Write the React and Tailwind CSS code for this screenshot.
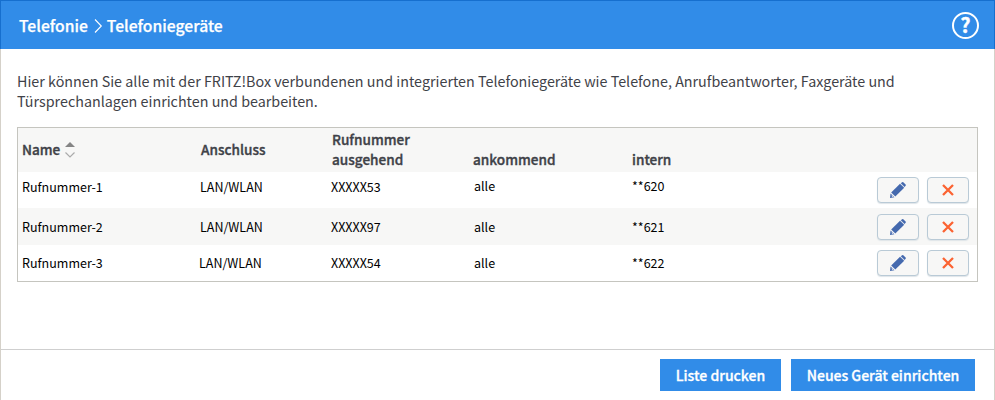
const devices = [
  { name: 'Rufnummer-1', line: 'LAN/WLAN', out: 'XXXXX53', incoming: 'alle', internal: '**620' },
  { name: 'Rufnummer-2', line: 'LAN/WLAN', out: 'XXXXX97', incoming: 'alle', internal: '**621' },
  { name: 'Rufnummer-3', line: 'LAN/WLAN', out: 'XXXXX54', incoming: 'alle', internal: '**622' },
];

const rowStyles = [
  'h-9 bg-white pt-[5px]',
  'h-[37px] bg-[#f7f7f6] pt-[6px]',
  'h-9 bg-white pt-[5px]',
];
const textStyles = ['pt-0', 'pt-[3px]', 'pt-[3px]'];
const shiftedStyles = ['-mt-px', 'mt-0', 'mt-0'];
const lineStyles = ['ml-0', 'ml-0', '-ml-px'];

function PencilIcon() {
  return (
    <svg width="16" height="16" viewBox="0 0 16 16" aria-hidden="true">
      <path d="M0 16 .6 11.6 4.4 15.2Z" fill="#4469ae" />
      <path d="M1.5 12.6 3.6 14.6 2 14.9Z" fill="#dfe5ef" />
      <path d="M1.2 10.6 10 1.8 14.2 5.8 5.3 14.6Z" fill="#4469ae" />
      <path d="M10.8 1.3 12.1.2Q12.7-.2 13.3.3L15.6 2.6Q16.1 3.2 15.6 3.8L14.6 5Z" fill="#4469ae" />
      <path d="M10.6 1.5 14.4 5.3" stroke="#c5d0e3" strokeWidth=".5" />
    </svg>
  );
}

function CrossIcon() {
  return (
    <svg width="12" height="12" viewBox="0 0 12 12" aria-hidden="true">
      <path d="M1 1 11 11M11 1 1 11" stroke="#fb6332" strokeWidth="2.3" />
    </svg>
  );
}

function IconButton({ label, children }) {
  return (
    <button
      aria-label={label}
      className="flex h-[26px] w-[42px] items-center justify-center rounded-[4px] border border-[#b9cad6] bg-[#f7f7f6] shadow-[0_1px_1px_#dfe5e9]"
    >
      {children}
    </button>
  );
}

export default function App() {
  return (
    <div className="flex h-[400px] w-[995px] flex-col bg-white font-['Noto_Sans_CJK_SC',sans-serif] text-[#3f4248]">
      <header className="flex h-[49px] shrink-0 items-center justify-between border-x border-t border-[#166fce] bg-[#318ce8] pr-[15px] pl-[18px] text-white">
        <div className="flex items-center pt-[2px] text-[15.7px] leading-5 font-medium [-webkit-text-stroke:0.25px]">
          <span>Telefonie</span>
          <svg className="mr-[4px] ml-[6px]" width="9" height="16" viewBox="0 0 9 16" fill="none" aria-hidden="true">
            <path d="M1 1.5 7.3 8 1 14.5" stroke="currentColor" strokeWidth="1.1" />
          </svg>
          <span>Telefoniegeräte</span>
        </div>
        <button aria-label="Hilfe" className="flex size-[27px] items-center justify-center rounded-full border-2 border-white pb-px text-[20px] leading-5 font-bold [-webkit-text-stroke:0.4px]">
          ?
        </button>
      </header>

      <main className="flex flex-1 flex-col border-x border-[#d5d1c9]">
        <div className="h-[300px] px-4 pt-[22px]">
          <p className="text-[14.32px] leading-5 whitespace-nowrap">
            Hier können Sie alle mit der FRITZ!Box verbundenen und integrierten Telefoniegeräte wie Telefone, Anrufbeantworter, Faxgeräte und
            <br />
            Türsprechanlagen einrichten und bearbeiten.
          </p>
          <section className="mt-[16px] w-[961px] border border-[#c5c5bf]">
            <div className="grid h-11 grid-cols-[179px_131px_141px_159px_1fr] bg-[#f7f7f6] pt-px pl-1 text-[13.6px] leading-5 font-medium [-webkit-text-stroke:0.35px]">
              <span className="flex items-center gap-[5px] pb-[3px]">
                Name
                <svg className="mt-px" width="10" height="16" viewBox="0 0 10 16" aria-hidden="true">
                  <path d="M0 5 5 0 10 5Z" fill="#858585" />
                  <path d="M.5 10.5 5 15 9.5 10.5" stroke="#ababab" strokeWidth="1.2" fill="none" />
                </svg>
              </span>
              <span className="self-center pb-[3px]">Anschluss</span>
              <span>
                Rufnummer
                <br />
                ausgehend
              </span>
              <span className="pt-5">ankommend</span>
              <span className="pt-5">intern</span>
            </div>
            {devices.map((d, i) => (
              <div key={d.name} className={`flex items-start pr-2 pl-1 text-[12.5px] leading-5 text-black ${rowStyles[i]}`}>
                <div className={`grid flex-1 grid-cols-[178px_131px_143px_158px_1fr] ${textStyles[i]}`}>
                  <span>{d.name}</span>
                  <span className={lineStyles[i]}>{d.line}</span>
                  <span>{d.out}</span>
                  <span className={shiftedStyles[i]}>{d.incoming}</span>
                  <span className={shiftedStyles[i]}>{d.internal}</span>
                </div>
                <div className="flex gap-2">
                  <IconButton label="Bearbeiten"><PencilIcon /></IconButton>
                  <IconButton label="Löschen"><CrossIcon /></IconButton>
                </div>
              </div>
            ))}
          </section>
        </div>
        <footer className="flex flex-1 items-start justify-end gap-[10px] border-t border-[#cfcfcf] pt-[9px] pr-[19px] text-[14px] font-medium text-white [-webkit-text-stroke:0.3px]">
          <button className="h-8 w-[121px] bg-[#318ce8] pt-px">Liste drucken</button>
          <button className="h-8 w-[184px] bg-[#318ce8] pt-px">Neues Gerät einrichten</button>
        </footer>
      </main>
    </div>
  );
}
